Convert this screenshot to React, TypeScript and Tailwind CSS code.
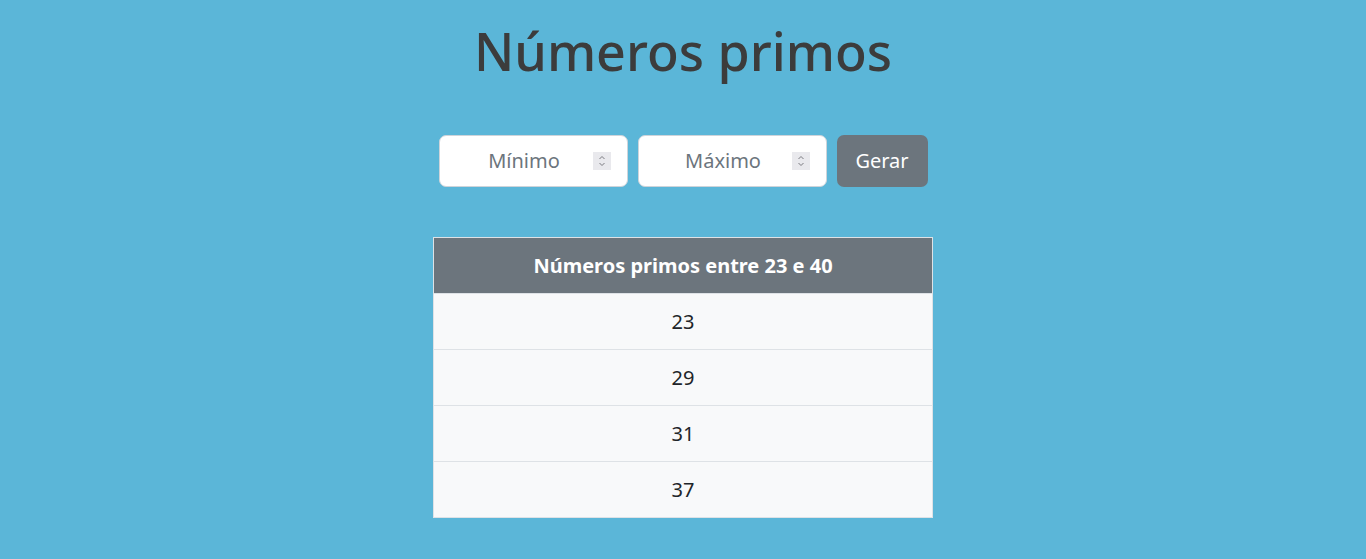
import { useState } from "react";

function Spinner() {
  return (
    <span className="flex h-[18px] w-[18px] shrink-0 flex-col items-center justify-center bg-[#e9e9ed]">
      <svg width="8" height="14" viewBox="0 0 8 14" fill="none" stroke="#7a7a80" strokeWidth="1">
        <path d="M1.5 5 L4 2.5 L6.5 5" />
        <path d="M1.5 9 L4 11.5 L6.5 9" />
      </svg>
    </span>
  );
}

function NumberBox({ placeholder }: { placeholder: string }) {
  return (
    <div className="flex h-[52px] w-[189px] items-center rounded-[7px] border border-[#ced4da] bg-white px-4">
      <input
        type="text"
        placeholder={placeholder}
        className="w-full min-w-0 flex-1 bg-transparent text-center text-[20px] text-[#212529] outline-none placeholder:text-[#6c757d]"
      />
      <Spinner />
    </div>
  );
}

export default function App() {
  const [primes] = useState([23, 29, 31, 37]);

  return (
    <div
      className="min-h-[559px] bg-[#5bb6d8] pb-10"
      style={{ fontFamily: '"Noto Sans", sans-serif' }}
    >
      <h1 className="pt-[14px] text-center text-[52px] font-medium leading-[74px] text-[#3c3c3c]">
        Números primos
      </h1>

      <div className="mt-[47px] flex justify-center gap-[10px]">
        <NumberBox placeholder="Mínimo" />
        <NumberBox placeholder="Máximo" />
        <button className="h-[52px] w-[91px] rounded-[7px] bg-[#6c757d] text-[20px] text-white">
          Gerar
        </button>
      </div>

      <div className="mt-[50px] flex justify-center">
        <table className="w-[500px] border border-[#dee2e6] text-center text-[20px]">
          <thead>
            <tr className="h-[56px] bg-[#6c757d] text-white">
              <th className="font-bold">Números primos entre 23 e 40</th>
            </tr>
          </thead>
          <tbody>
            {primes.map((p) => (
              <tr key={p} className="h-[56px] border-t border-[#dee2e6] bg-[#f8f9fa] text-[#212529]">
                <td>{p}</td>
              </tr>
            ))}
          </tbody>
        </table>
      </div>
    </div>
  );
}
